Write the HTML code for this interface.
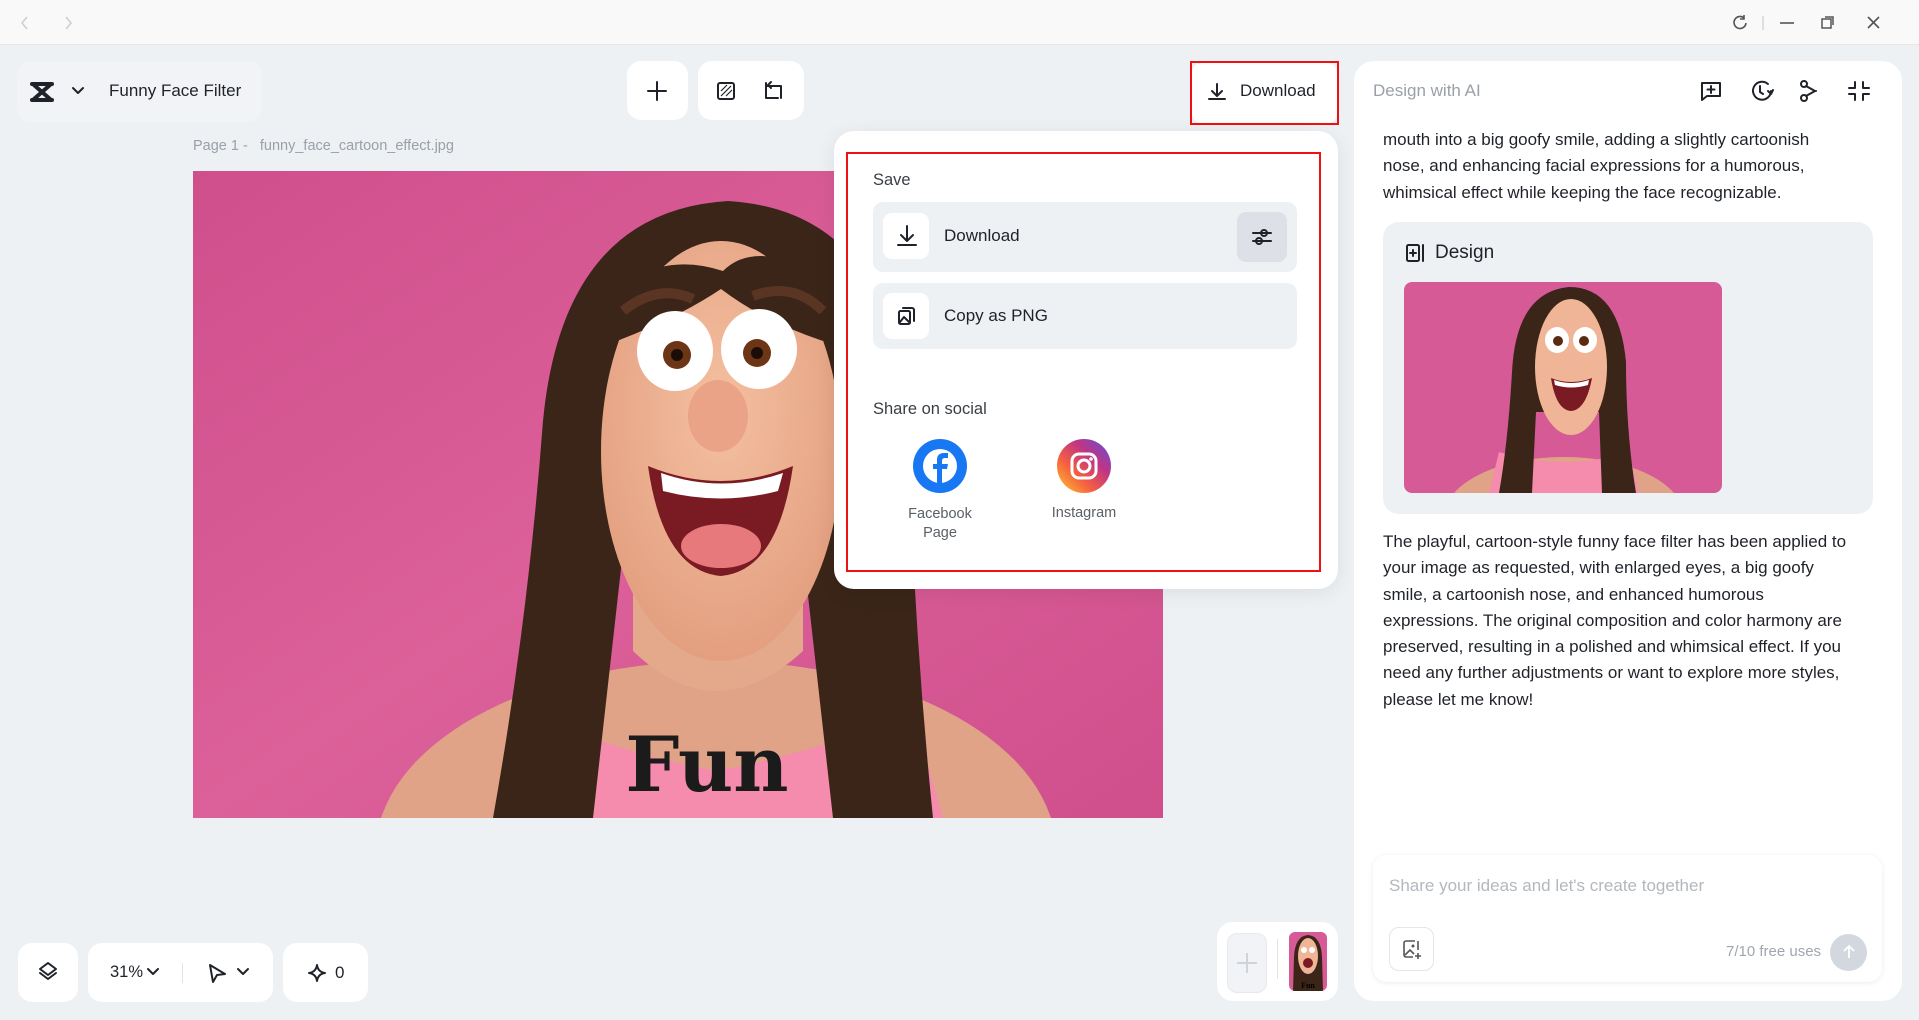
<!DOCTYPE html>
<html><head><meta charset="utf-8">
<style>
*{box-sizing:border-box;margin:0;padding:0}
body{width:1919px;height:1020px;overflow:hidden;background:#eef1f4;font-family:"Liberation Sans",sans-serif;color:#1f2329;position:relative}
.abs{position:absolute}
.card{position:absolute;background:#fff;border-radius:14px}
svg{display:block}
.ic{stroke:#1f2329;fill:none;stroke-width:2;stroke-linecap:round;stroke-linejoin:round}
.txt{font-size:17px;line-height:26.3px;color:#1f2329}
</style></head><body>
<!-- top bar -->
<div class="abs" style="left:0;top:0;width:1919px;height:45px;background:#f9f9f9;border-bottom:1px solid #e8e8e8"></div>
<svg class="abs" style="left:18px;top:13px" width="60" height="20"><path d="M9 4 L4 10 L9 16" stroke="#cfcfcf" stroke-width="1.6" fill="none"/><path d="M48 4 L53 10 L48 16" stroke="#cfcfcf" stroke-width="1.6" fill="none"/></svg>
<svg class="abs" style="left:1726px;top:12px" width="180" height="22"><path d="M18 6a6 6 0 1 0 2 5M18 3v4h-4" stroke="#555" stroke-width="1.6" fill="none"/><path d="M37 4v14" stroke="#ccc" stroke-width="1.2"/><path d="M54 11h14" stroke="#555" stroke-width="1.6"/><rect x="96" y="7" width="9" height="9" stroke="#555" stroke-width="1.5" fill="none"/><path d="M99 5h8v8" stroke="#555" stroke-width="1.5" fill="none"/><path d="M142 5l11 11M153 5l-11 11" stroke="#555" stroke-width="1.6"/></svg>

<!-- logo pill -->
<div class="abs" style="left:17px;top:61px;width:245px;height:61px;background:#f1f3f6;border-radius:14px"></div>
<svg class="abs" style="left:28px;top:80px" width="28" height="24"><path d="M4 4h20M4 20h20M6 5L22 19M22 5L6 19" stroke="#1f2329" stroke-width="4" fill="none" stroke-linecap="round"/></svg>
<svg class="abs" style="left:71px;top:86px" width="14" height="10"><path d="M2 2l5 5 5-5" class="ic" stroke-width="1.8"/></svg>
<div class="abs" style="left:109px;top:81px;font-size:17px">Funny Face Filter</div>

<!-- toolbar -->
<div class="card" style="left:627px;top:61px;width:61px;height:59px"></div>
<svg class="abs" style="left:646px;top:80px" width="22" height="22"><path d="M11 2v18M2 11h18" class="ic" stroke-width="2.2"/></svg>
<div class="card" style="left:698px;top:61px;width:106px;height:59px"></div>
<svg class="abs" style="left:716px;top:80px" width="80" height="22"><rect x="2" y="3" width="16" height="16" rx="2" class="ic"/><path d="M5 16l10-10M5 11l6-6M10 16l6-6" stroke="#1f2329" stroke-width="1.2"/><path d="M50 3v15h12M50 6h15v12M55 2l-3 3 3 3" class="ic" stroke-width="1.8"/></svg>

<!-- page label -->
<div class="abs" style="left:193px;top:138px;font-size:14.5px;color:#9aa0a8">Page 1 -&nbsp;&nbsp; funny_face_cartoon_effect.jpg</div>

<!-- main image -->
<svg class="abs" style="left:193px;top:171px" width="970" height="647" viewBox="0 0 970 647">
<defs><linearGradient id="bg" x1="0" y1="0" x2="1" y2="1"><stop offset="0" stop-color="#cf4f8c"/><stop offset=".5" stop-color="#dc6099"/><stop offset="1" stop-color="#cf4f8c"/></linearGradient>
<radialGradient id="sk" cx=".5" cy=".4" r=".6"><stop offset="0" stop-color="#f4c0a0"/><stop offset="1" stop-color="#e39f80"/></radialGradient></defs>
<rect width="970" height="647" fill="url(#bg)"/>
<ellipse cx="523" cy="680" rx="340" ry="190" fill="#e0a387"/>
<path d="M300 647 L330 540 Q420 580 523 600 Q630 580 720 540 L750 647Z" fill="#f58cad"/>
<path d="M535 30 Q370 40 350 250 Q335 450 300 647 L400 647 L430 380 L610 380 L640 647 L740 647 Q720 450 715 250 Q700 40 535 30Z" fill="#3b2519"/>
<path d="M440 480 Q523 560 610 480 L610 380 L440 380Z" fill="#e4a88b"/>
<ellipse cx="528" cy="280" rx="120" ry="210" fill="url(#sk)"/>
<path d="M420 120 Q470 80 530 100 Q560 70 620 100 L630 170 Q570 150 528 118 Q480 150 410 175Z" fill="#3b2519"/>
<path d="M430 140 Q465 112 500 128" stroke="#5a3524" stroke-width="10" fill="none"/>
<path d="M560 125 Q600 110 630 140" stroke="#5a3524" stroke-width="10" fill="none"/>
<ellipse cx="482" cy="180" rx="38" ry="40" fill="#fff"/><ellipse cx="566" cy="178" rx="38" ry="40" fill="#fff"/>
<circle cx="484" cy="184" r="14" fill="#6b3516"/><circle cx="564" cy="182" r="14" fill="#6b3516"/>
<circle cx="484" cy="184" r="6" fill="#1a0d08"/><circle cx="564" cy="182" r="6" fill="#1a0d08"/>
<ellipse cx="525" cy="245" rx="30" ry="36" fill="#eaa386"/>
<path d="M455 295 Q528 325 600 295 Q585 400 528 405 Q470 400 455 295Z" fill="#7a1a22"/>
<path d="M468 302 Q528 323 590 302 L585 320 Q528 335 470 320Z" fill="#fff"/>
<ellipse cx="528" cy="375" rx="40" ry="22" fill="#e7787c"/>
<text x="514" y="620" text-anchor="middle" font-family="DejaVu Serif,serif" font-weight="bold" font-size="76" fill="#1b1b1b">Fun</text>
</svg>

<!-- Download button -->
<div class="card" style="left:1192px;top:63px;width:145px;height:60px;border-radius:10px"></div>
<div class="abs" style="left:1190px;top:61px;width:149px;height:64px;border:2px solid #ee1111"></div>
<svg class="abs" style="left:1206px;top:81px" width="22" height="22"><path d="M11 3v12M6 10l5 5 5-5M3 18h16" class="ic" stroke-width="2.2"/></svg>
<div class="abs" style="left:1240px;top:81px;font-size:17px">Download</div>

<!-- popup -->
<div class="card" style="left:834px;top:131px;width:504px;height:458px;border-radius:20px;box-shadow:0 4px 20px rgba(0,0,0,.08)"></div>
<div class="abs" style="left:846px;top:152px;width:475px;height:420px;border:2.5px solid #ee1111"></div>
<div class="abs" style="left:873px;top:171px;font-size:16.5px;color:#3a3f45">Save</div>
<div class="abs" style="left:873px;top:202px;width:424px;height:70px;background:#eef1f4;border-radius:10px"></div>
<div class="abs" style="left:883px;top:213px;width:46px;height:46px;background:#fff;border-radius:9px"></div>
<svg class="abs" style="left:894px;top:223px" width="26" height="26"><path d="M13 3v15M7 12l6 6 6-6M4 22h18" class="ic" stroke-width="2.2"/></svg>
<div class="abs" style="left:944px;top:226px;font-size:17px">Download</div>
<div class="abs" style="left:1237px;top:212px;width:50px;height:50px;background:#dde1e7;border-radius:9px"></div>
<svg class="abs" style="left:1250px;top:225px" width="24" height="24"><path d="M3 8h18M3 16h18" class="ic" stroke-width="1.8"/><circle cx="14" cy="8" r="3" fill="#dde1e7" class="ic" stroke-width="1.8"/><circle cx="9" cy="16" r="3" fill="#dde1e7" class="ic" stroke-width="1.8"/></svg>
<div class="abs" style="left:873px;top:283px;width:424px;height:66px;background:#eef1f4;border-radius:10px"></div>
<div class="abs" style="left:883px;top:293px;width:46px;height:46px;background:#fff;border-radius:9px"></div>
<svg class="abs" style="left:896px;top:305px" width="22" height="22"><rect x="3" y="6" width="11" height="13" rx="1.5" class="ic" stroke-width="1.8"/><path d="M7 3h9a2 2 0 0 1 2 2v11" class="ic" stroke-width="1.8"/><path d="M4 17l4-5 5 5" class="ic" stroke-width="1.6"/></svg>
<div class="abs" style="left:944px;top:306px;font-size:17px">Copy as PNG</div>
<div class="abs" style="left:873px;top:400px;font-size:16.5px;color:#3a3f45">Share on social</div>
<svg class="abs" style="left:913px;top:439px" width="54" height="54"><circle cx="27" cy="27" r="27" fill="#1877f2"/><circle cx="27" cy="27" r="17" fill="#fff"/><path d="M29 46V30h5l1-5h-6v-3c0-2 1-3 3-3h3v-5h-4c-5 0-7 3-7 7v4h-4v5h4v16z" fill="#1877f2"/></svg>
<svg class="abs" style="left:1057px;top:439px" width="54" height="54"><defs><linearGradient id="ig" x1="0" y1="1" x2="1" y2="0"><stop offset="0" stop-color="#fdc830"/><stop offset=".35" stop-color="#f56040"/><stop offset=".65" stop-color="#c13584"/><stop offset="1" stop-color="#5851db"/></linearGradient></defs><circle cx="27" cy="27" r="27" fill="url(#ig)"/><rect x="15" y="15" width="24" height="24" rx="7" stroke="#fff" stroke-width="3" fill="none"/><circle cx="27" cy="27" r="6" stroke="#fff" stroke-width="3" fill="none"/><circle cx="34" cy="20" r="1.8" fill="#fff"/></svg>
<div class="abs" style="left:890px;top:505px;width:100px;text-align:center;font-size:14.5px;line-height:19px;color:#5a6068">Facebook<br>Page</div>
<div class="abs" style="left:1034px;top:505px;width:100px;text-align:center;font-size:14.5px;color:#5a6068">Instagram</div>

<!-- right panel -->
<div class="card" style="left:1354px;top:61px;width:548px;height:940px;border-radius:20px"></div>
<div class="abs" style="left:1373px;top:81px;font-size:17px;color:#9aa0a8">Design with AI</div>
<svg class="abs" style="left:1698px;top:78px" width="190" height="26"><path d="M4 5h18v13H9l-5 4z" class="ic" stroke-width="2"/><path d="M13 8v7M9.5 11.5h7" class="ic" stroke-width="2"/><path d="M70 6a9 9 0 1 0 3 7" class="ic"/><path d="M62 8v6l3 2" class="ic"/><path d="M70 13l3 3 2-4" class="ic"/><circle cx="106" cy="6" r="3" class="ic"/><circle cx="106" cy="20" r="3" class="ic"/><path d="M108 8l9 5-9 5" class="ic"/><circle cx="118" cy="13" r="1" fill="#1f2329"/><path d="M157 4v6h-6M165 4v6h6M157 22v-6h-6M165 22v-6h6" class="ic"/></svg>
<div class="abs txt" style="left:1383px;top:127px;width:455px">mouth into a big goofy smile, adding a slightly cartoonish nose, and enhancing facial expressions for a humorous, whimsical effect while keeping the face recognizable.</div>
<div class="abs" style="left:1383px;top:222px;width:490px;height:292px;background:#eef1f4;border-radius:16px"></div>
<svg class="abs" style="left:1404px;top:242px" width="22" height="22"><rect x="3" y="3" width="12" height="16" rx="1.5" class="ic" stroke-width="1.8"/><path d="M9 8v6M6 11h6M19 3v16" class="ic" stroke-width="1.8"/></svg>
<div class="abs" style="left:1435px;top:242px;font-size:19px">Design</div>
<svg class="abs" style="left:1404px;top:282px;border-radius:8px" width="318" height="211" viewBox="0 0 318 211">
<rect width="318" height="211" fill="#d65a96"/>
<ellipse cx="160" cy="235" rx="120" ry="60" fill="#e0a387"/>
<path d="M85 211 L95 170 Q160 190 225 170 L235 211Z" fill="#f58cad"/>
<path d="M165 5 Q112 10 108 90 Q104 160 95 211 L128 211 L132 130 L195 130 L198 211 L232 211 Q222 150 222 80 Q215 5 165 5Z" fill="#3b2519"/>
<ellipse cx="167" cy="85" rx="36" ry="68" fill="#efb596"/>
<ellipse cx="153" cy="58" rx="12" ry="13" fill="#fff"/><ellipse cx="181" cy="58" rx="12" ry="13" fill="#fff"/>
<circle cx="154" cy="59" r="5" fill="#5a2a12"/><circle cx="180" cy="59" r="5" fill="#5a2a12"/>
<path d="M147 96 Q167 104 188 96 Q182 128 167 129 Q152 128 147 96Z" fill="#7a1a22"/>
<path d="M150 98 Q167 104 185 98 L184 103 Q167 108 151 103Z" fill="#fff"/>
</svg>
<div class="abs txt" style="left:1383px;top:529px;width:472px">The playful, cartoon-style funny face filter has been applied to your image as requested, with enlarged eyes, a big goofy smile, a cartoonish nose, and enhanced humorous expressions. The original composition and color harmony are preserved, resulting in a polished and whimsical effect. If you need any further adjustments or want to explore more styles, please let me know!</div>

<!-- input -->
<div class="abs" style="left:1373px;top:855px;width:509px;height:127px;background:#fff;border-radius:14px;box-shadow:0 1px 6px rgba(0,0,0,.08)"></div>
<div class="abs" style="left:1389px;top:876px;font-size:17px;color:#b3b8bf">Share your ideas and let's create together</div>
<div class="abs" style="left:1389px;top:927px;width:45px;height:44px;border:1px solid #e3e6ea;border-radius:10px"></div>
<svg class="abs" style="left:1401px;top:938px" width="22" height="22"><path d="M14 3H5a2 2 0 0 0-2 2v12a2 2 0 0 0 2 2h7M17 3v9" stroke="#555" stroke-width="1.6" fill="none"/><path d="M4 17l5-5 4 4" stroke="#555" stroke-width="1.6" fill="none"/><circle cx="12" cy="8" r="1.5" fill="#555"/><path d="M17 15v6M14 18h6" stroke="#555" stroke-width="1.6"/></svg>
<div class="abs" style="left:1726px;top:943px;font-size:15px;color:#a0a6ad">7/10 free uses</div>
<div class="abs" style="left:1830px;top:934px;width:37px;height:37px;border-radius:50%;background:#d3d8df"></div>
<svg class="abs" style="left:1840px;top:943px" width="18" height="18"><path d="M9 15V3M4 8l5-5 5 5" stroke="#fff" stroke-width="1.8" fill="none"/></svg>

<!-- bottom left -->
<div class="card" style="left:18px;top:943px;width:60px;height:59px"></div>
<svg class="abs" style="left:36px;top:960px" width="24" height="24"><path d="M12 3l8 6-8 6-8-6z" class="ic" stroke-width="2"/><path d="M4 13l8 6 8-6" class="ic" stroke-width="2"/></svg>
<div class="card" style="left:88px;top:943px;width:185px;height:59px"></div>
<div class="abs" style="left:110px;top:963px;font-size:16.5px">31%</div>
<svg class="abs" style="left:146px;top:967px" width="14" height="10"><path d="M2 2l5 5 5-5" class="ic" stroke-width="1.8"/></svg>
<div class="abs" style="left:182px;top:963px;width:1px;height:20px;background:#e0e3e7"></div>
<svg class="abs" style="left:206px;top:962px" width="22" height="22"><path d="M4 3l15 9-8 1-4 7z" class="ic" stroke-width="2"/></svg>
<svg class="abs" style="left:236px;top:967px" width="14" height="10"><path d="M2 2l5 5 5-5" class="ic" stroke-width="1.8"/></svg>
<div class="card" style="left:283px;top:943px;width:85px;height:59px"></div>
<svg class="abs" style="left:307px;top:963px" width="20" height="20"><path d="M10 2Q11 9 18 10Q11 11 10 18Q9 11 2 10Q9 9 10 2z" class="ic" stroke-width="2"/></svg>
<div class="abs" style="left:335px;top:963px;font-size:17px">0</div>

<!-- bottom thumbs -->
<div class="card" style="left:1217px;top:922px;width:121px;height:79px;border-radius:16px"></div>
<div class="abs" style="left:1227px;top:933px;width:40px;height:60px;background:#f1f3f6;border:1px solid #e6e9ed;border-radius:10px"></div>
<svg class="abs" style="left:1236px;top:952px" width="22" height="22"><path d="M11 1v20M1 11h20" stroke="#cfd4da" stroke-width="2"/></svg>
<div class="abs" style="left:1277px;top:939px;width:1px;height:40px;background:#e0e3e7"></div>
<svg class="abs" style="left:1289px;top:932px;border-radius:6px" width="38" height="59" viewBox="0 0 38 59"><rect width="38" height="59" fill="#d65a96"/><path d="M19 3Q6 4 5 25L4 59L34 59L33 25Q32 4 19 3Z" fill="#3b2519"/><ellipse cx="19" cy="24" rx="10" ry="18" fill="#efb596"/><circle cx="15" cy="18" r="3" fill="#fff"/><circle cx="23" cy="18" r="3" fill="#fff"/><ellipse cx="19" cy="31" rx="5" ry="5" fill="#7a1a22"/><text x="19" y="56" text-anchor="middle" font-size="8" font-weight="bold" font-family="Liberation Serif,serif">Fun</text></svg>
</body></html>
